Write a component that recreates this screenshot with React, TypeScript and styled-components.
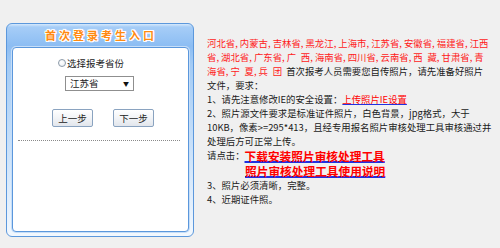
import React from "react";
import styled, { createGlobalStyle } from "styled-components";

const Global = createGlobalStyle`
  html, body { margin: 0; padding: 0; background: #f0f0f0; }
  body { font-family: "Noto Sans CJK SC", "Noto Sans", sans-serif; }
`;

const Page = styled.div`
  display: flex;
  align-items: flex-start;
  padding-left: 6px;
  width: 500px;
  height: 248px;
  box-sizing: border-box;
`;

const Panel = styled.div`
  margin-top: 23px;
  width: 188px;
  height: 214px;
  box-sizing: border-box;
  border: 1px solid #5c98dc;
  border-radius: 6px;
  background: linear-gradient(180deg, #d6e9fc 0px, #a6cdf7 3px, #8cbdf3 22px, #a3cbf5 40px, #d6e8fb 150px, #f2f8fe 100%);
  padding: 0 4px 4px 5px;
  display: flex;
  flex-direction: column;
`;

const Header = styled.div`
  height: 23px;
  display: flex;
  align-items: center;
  justify-content: center;
  padding-left: 1px;
`;

const Title = styled.span`
  font-size: 11px;
  font-weight: 700;
  letter-spacing: 3px;
  color: #ff8a10;
  line-height: 1;
  text-shadow: 1px 0 0 #fff, -1px 0 0 #fff, 0 1px 0 #fff, 0 -1px 0 #fff,
    1px 1px 0 #fff, -1px -1px 0 #fff, 1px -1px 0 #fff, -1px 1px 0 #fff;
`;

const Inner = styled.div`
  flex: 1;
  background: #fff;
  border: 1px solid #5b97dc;
  border-radius: 4px;
  box-shadow: 0 0 0 1px #c6def8;
  display: flex;
  flex-direction: column;
  font-size: 9.5px;
  color: #222;
`;

const RadioRow = styled.label`
  margin: 9px 0 0 45px;
  height: 12px;
  display: flex;
  align-items: center;
  gap: 1px;
  line-height: 12px;
`;

const RadioDot = styled.span`
  width: 6px;
  height: 6px;
  border: 1px solid #8c9aa8;
  border-radius: 50%;
  background: radial-gradient(circle at 40% 40%, #fff 0%, #e9edf1 100%);
`;

const SelectBox = styled.div`
  margin: 7px 0 0 52px;
  width: 69px;
  height: 15px;
  box-sizing: border-box;
  border: 1px solid #8f8f8f;
  background: #fff;
  display: flex;
  align-items: center;
  justify-content: space-between;
  padding: 0 4px 0 4px;
  line-height: 13px;
`;

const Arrow = styled.span`
  font-size: 6px;
  color: #111;
`;

const ButtonRow = styled.div`
  margin: 18px 0 0 39px;
  display: flex;
  gap: 20px;
`;

const Btn = styled.button`
  width: 41px;
  height: 18px;
  box-sizing: border-box;
  border: 1px solid #8aa3c0;
  border-radius: 2px;
  background: linear-gradient(180deg, #ffffff 0%, #f2f4f7 50%, #e2e6ec 100%);
  font-family: inherit;
  font-size: 9.5px;
  color: #222;
  padding: 0;
  line-height: 16px;
`;

const Dotted = styled.div`
  margin: 13px 0 0 5px;
  width: 162px;
  border-top: 1px dotted #8a8a8a;
`;

const Info = styled.div`
  margin: 36px 0 0 13px;
  font-size: 9.4px;
  color: #1a1a1a;
  display: flex;
  flex-direction: column;
`;

const Line = styled.div<{ $h?: number; $indent?: number }>`
  height: ${(p) => p.$h ?? 14}px;
  line-height: ${(p) => p.$h ?? 14}px;
  white-space: nowrap;
  padding-left: ${(p) => p.$indent ?? 0}px;
`;

const Red = styled.span`
  color: #ff1a1a;
`;

const Comma = styled.span`
  display: inline-block;
  width: 4.7px;
`;

const SmallLink = styled.a`
  color: #ff0000;
  text-decoration: underline;
  text-decoration-color: #2030e0;
  text-underline-offset: 1px;
`;

const BigLink = styled.a`
  display: inline-block;
  height: 15px;
  line-height: 15px;
  vertical-align: top;
  color: #ff0000;
  font-size: 11.7px;
  font-weight: 700;
  text-decoration: underline;
  text-decoration-color: #2030e0;
  text-decoration-thickness: 1.5px;
  text-underline-offset: 0px;
`;

const Places: React.FC<{ items: string[] }> = ({ items }) => (
  <Red>
    {items.map((s, i) => (
      <React.Fragment key={i}>
        {s}
        {i < items.length - 1 && <Comma>,</Comma>}
      </React.Fragment>
    ))}
  </Red>
);

export default function App() {
  return (
    <>
      <Global />
      <Page>
        <Panel>
          <Header>
            <Title>首次登录考生入口</Title>
          </Header>
          <Inner>
            <RadioRow>
              <RadioDot />
              选择报考省份
            </RadioRow>
            <SelectBox>
              <span>江苏省</span>
              <Arrow>▼</Arrow>
            </SelectBox>
            <ButtonRow>
              <Btn>上一步</Btn>
              <Btn>下一步</Btn>
            </ButtonRow>
            <Dotted />
          </Inner>
        </Panel>
        <Info>
          <Line>
            <Places items={["河北省", "内蒙古", "吉林省", "黑龙江", "上海市", "江苏省", "安徽省", "福建省", "江西"]} />
          </Line>
          <Line>
            <Places items={["省", "湖北省", "广东省", "广\u2002西", "海南省", "四川省", "云南省", "西\u2002藏", "甘肃省", "青"]} />
          </Line>
          <Line>
            <Places items={["海省", "宁\u2002夏", "兵\u2002团"]} />
            <span>&nbsp;&nbsp;首次报考人员需要您自传照片，请先准备好照片</span>
          </Line>
          <Line>文件，要求：</Line>
          <Line>
            1、请先注意修改IE的安全设置：<SmallLink href="#">上传照片IE设置</SmallLink>
          </Line>
          <Line>2、照片源文件要求是标准证件照片，白色背景，jpg格式，大于</Line>
          <Line>10KB，像素&gt;=295*413，且经专用报名照片审核处理工具审核通过并</Line>
          <Line>处理后方可正常上传。</Line>
          <Line $h={15}>
            请点击：<BigLink href="#">下载安装照片审核处理工具</BigLink>
          </Line>
          <Line $h={15} $indent={38}>
            <BigLink href="#">照片审核处理工具使用说明</BigLink>
          </Line>
          <Line>3、照片必须清晰，完整。</Line>
          <Line>4、近期证件照。</Line>
        </Info>
      </Page>
    </>
  );
}
